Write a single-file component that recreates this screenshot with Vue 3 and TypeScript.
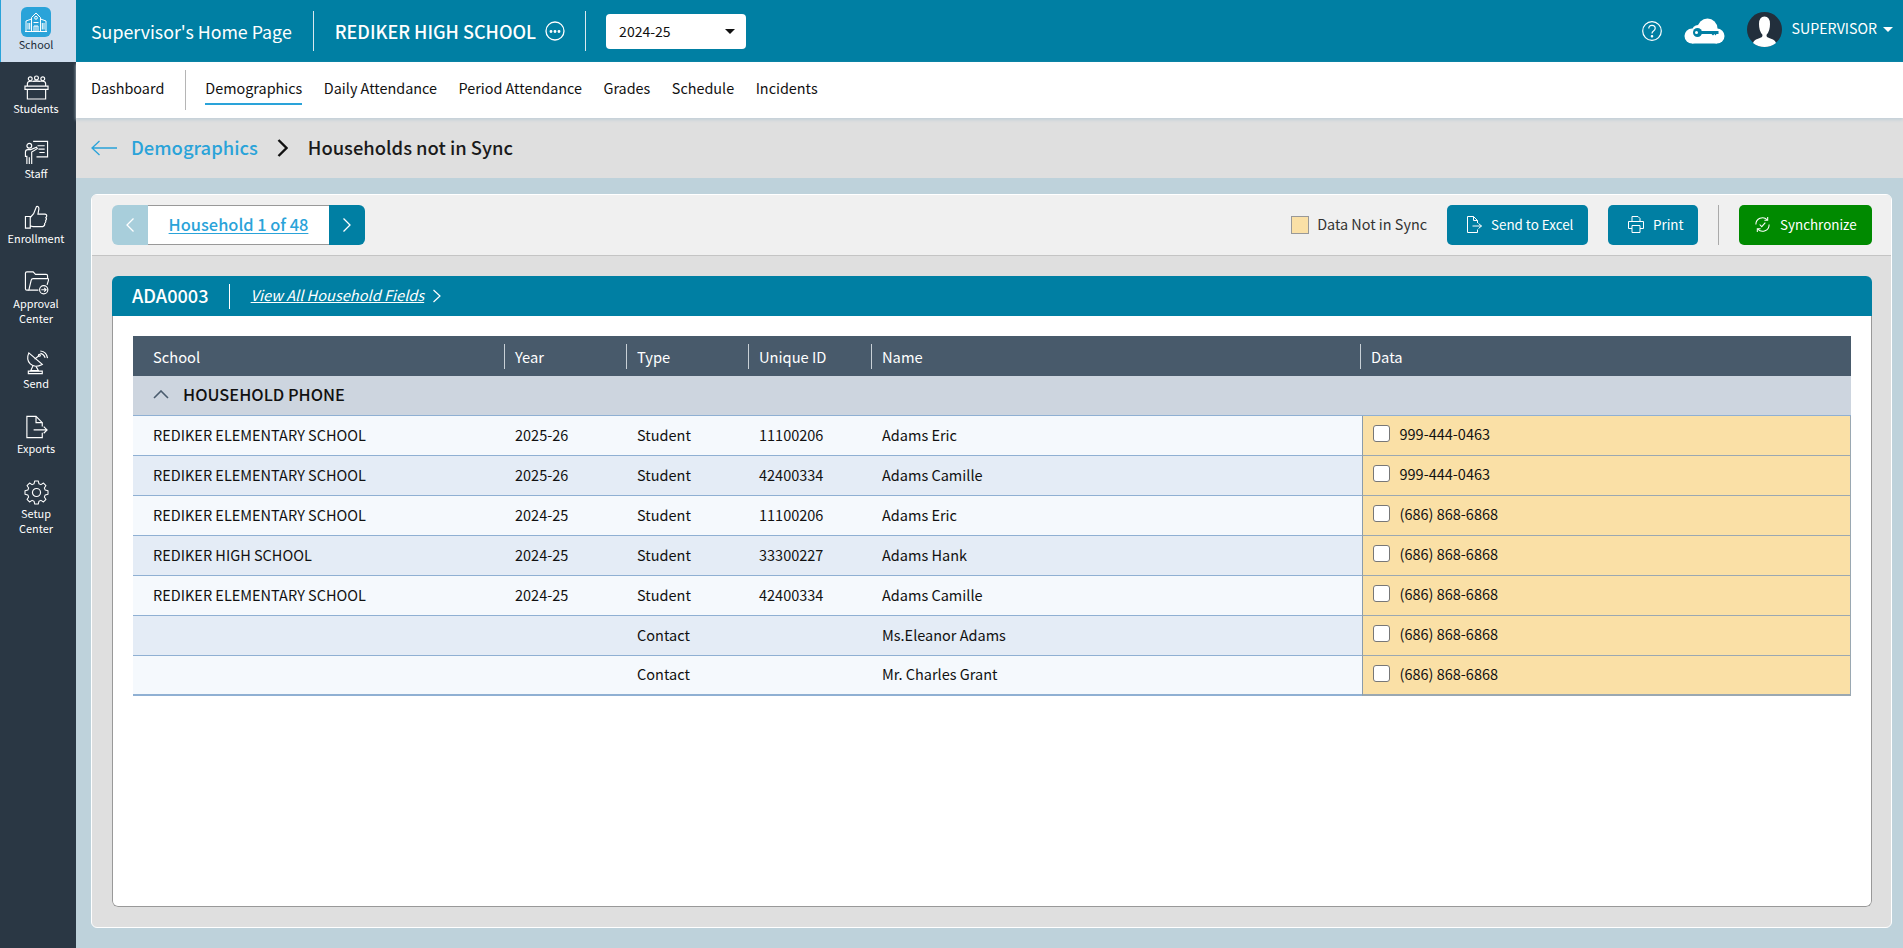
<script setup lang="ts">
interface NavItem {
  id: string
  label: string[]
}
interface Row {
  school: string
  year: string
  type: string
  uid: string
  name: string
  data: string
}

const sideItems: NavItem[] = [
  { id: 'students', label: ['Students'] },
  { id: 'staff', label: ['Staff'] },
  { id: 'enrollment', label: ['Enrollment'] },
  { id: 'approval', label: ['Approval', 'Center'] },
  { id: 'send', label: ['Send'] },
  { id: 'exports', label: ['Exports'] },
  { id: 'setup', label: ['Setup', 'Center'] },
]

const tabs: string[] = ['Daily Attendance', 'Period Attendance', 'Grades', 'Schedule', 'Incidents']
const columns: string[] = ['School', 'Year', 'Type', 'Unique ID', 'Name', 'Data']

const rows: Row[] = [
  { school: 'REDIKER ELEMENTARY SCHOOL', year: '2025-26', type: 'Student', uid: '11100206', name: 'Adams Eric', data: '999-444-0463' },
  { school: 'REDIKER ELEMENTARY SCHOOL', year: '2025-26', type: 'Student', uid: '42400334', name: 'Adams Camille', data: '999-444-0463' },
  { school: 'REDIKER ELEMENTARY SCHOOL', year: '2024-25', type: 'Student', uid: '11100206', name: 'Adams Eric', data: '(686) 868-6868' },
  { school: 'REDIKER HIGH SCHOOL', year: '2024-25', type: 'Student', uid: '33300227', name: 'Adams Hank', data: '(686) 868-6868' },
  { school: 'REDIKER ELEMENTARY SCHOOL', year: '2024-25', type: 'Student', uid: '42400334', name: 'Adams Camille', data: '(686) 868-6868' },
  { school: '', year: '', type: 'Contact', uid: '', name: 'Ms.Eleanor Adams', data: '(686) 868-6868' },
  { school: '', year: '', type: 'Contact', uid: '', name: 'Mr. Charles Grant', data: '(686) 868-6868' },
]
</script>

<template>
  <div class="app">
    <aside class="side">
      <div class="side-school">
        <span class="tile">
          <svg width="24" height="20" viewBox="0 0 24 20" fill="none" stroke="#fff" stroke-width="1">
            <path d="M1 19.500h22M2 19.500V9L7.500 7M22 19.500V9l-5.500-2" />
            <path d="M7.500 19.500V5.500L12 1l4.500 4.500v14" />
            <circle cx="12" cy="5.800" r="1.400" />
            <path d="M10 19.500v-5.500h4v5.500M12 14v5.500M9.500 10.500h5" />
            <path d="M4 11v6.500M5.700 11v6.500M18.300 11v6.500M20 11v6.500" />
          </svg>
        </span>
        <span class="side-school-label">School</span>
      </div>
      <nav class="side-list">
        <a v-for="item in sideItems" :key="item.id" class="side-item">
          <svg class="side-icon" viewBox="0 0 26 26" fill="none" stroke="#fff" stroke-width="1.200">
            <template v-if="item.id === 'students'">
              <circle cx="6.500" cy="4" r="2" />
              <circle cx="13" cy="3" r="2" />
              <circle cx="19.500" cy="4" r="2" />
              <path d="M3.500 11.500V9q0-2.500 3-2.500h13q3 0 3 2.500v2.500" />
              <path d="M9.500 6.800q3.500-1.600 7 0" />
              <path d="M1 11.500h24V15H1z" />
              <path d="M3.500 15v10h19V15" />
            </template>
            <template v-else-if="item.id === 'staff'">
              <path d="M9.500 1.500h15v16H13" />
              <path d="M14 6h7.500M15 9.500h6.500M16 13h5.500" />
              <circle cx="5.500" cy="6" r="2.500" />
              <path d="M3 25v-8H1.500v-4.500Q1.500 10 4 10h3l6-2.500 .8 1.500L8 12.500V25M5.500 18v7" />
            </template>
            <template v-else-if="item.id === 'enrollment'">
              <path d="M1.500 12h5v12h-5zM6.500 13l3.500-4 3-7.500q2.500-.5 2.500 2.500L14.500 9.500h7.500q2 .5 1.500 2.500l-.8 1q1.500 1.500-.2 3.200 .8 2-1 3 .5 2.500-2 3.300H9.500q-2 0-3-1" />
            </template>
            <template v-else-if="item.id === 'approval'">
              <path d="M5 21H3q-1.500 0-1.500-1.500V3.500Q1.500 2 3 2h6.500L12 4.500h11q1.500 0 1.500 1.500v3" />
              <path d="M15 21H5l2.500-10.500q.3-1.500 2-1.500H24.500q1.500 0 1 1.500l-1.500 5" />
              <circle cx="20.500" cy="20.500" r="4.300" />
              <path d="M18 20.500h5M21 18.500l2 2-2 2" />
            </template>
            <template v-else-if="item.id === 'send'">
              <path d="M5 3q-3 7 1.500 11.500T19 15z" />
              <path d="M11 9.500l4.500-3.500" />
              <circle cx="16" cy="5.500" r="1" />
              <path d="M17 1q6.500.5 7.500 7.500M17 3.500q3.500.5 5 4.500" />
              <path d="M9.500 16l-2.500 5.500h8L12.500 17" />
              <path d="M4.500 22h14.500v2.500H4.500z" />
            </template>
            <template v-else-if="item.id === 'exports'">
              <path d="M19 12V8l-6.500-6.500H3v22h16v-5" />
              <path d="M12.500 1.500V8H19" />
              <path d="M10 15.500h14M20.500 12l3.500 3.500-3.500 3.500" />
            </template>
            <template v-else>
              <circle cx="13" cy="13" r="4.200" />
              <path d="M11 1.500h4l.8 3.300 2.200.9 2.900-1.800 2.800 2.800-1.800 2.900.9 2.200 3.200.8v4l-3.200.8-.9 2.200 1.800 2.900-2.800 2.800-2.900-1.800-2.200.9-.8 3.300h-4l-.8-3.300-2.200-.9-2.900 1.800-2.800-2.800 1.800-2.900-.9-2.200-3.200-.8v-4l3.200-.8.9-2.200-1.800-2.900 2.800-2.800 2.900 1.800 2.200-.9z" transform="translate(13 13) scale(.92) translate(-13 -14.600)" stroke-linejoin="round" />
            </template>
          </svg>
          <span class="side-label">
            <span v-for="line in item.label" :key="line" class="side-line">{{ line }}</span>
          </span>
        </a>
      </nav>
    </aside>

    <div class="main">
      <header class="top">
        <span class="top-title">Supervisor's Home Page</span>
        <span class="top-div"></span>
        <span class="top-school">REDIKER HIGH SCHOOL</span>
        <svg class="more" width="20" height="20" viewBox="0 0 20 20" fill="none" stroke="#fff" stroke-width="1.300">
          <circle cx="10" cy="10" r="9" />
          <circle cx="6" cy="10.500" r=".8" fill="#fff" />
          <circle cx="10" cy="10.500" r=".8" fill="#fff" />
          <circle cx="14" cy="10.500" r=".8" fill="#fff" />
        </svg>
        <span class="top-div second"></span>
        <div class="year">
          <span>2024-25</span>
          <span class="caret dark"></span>
        </div>
        <div class="top-right">
          <svg class="help" width="20" height="20" viewBox="0 0 20 20" fill="none" stroke="#fff" stroke-width="1.200">
            <circle cx="10" cy="10" r="9.300" />
            <path d="M6.800 7.500Q6.800 4.300 10 4.300t3.200 2.900q0 1.700-1.700 2.700-1.500.9-1.500 2.600" />
            <circle cx="10" cy="15.200" r=".7" fill="#fff" />
          </svg>
          <svg class="cloud" width="41" height="26" viewBox="0 0 41 26">
            <g fill="#fff">
              <circle cx="8" cy="18" r="7.500" />
              <circle cx="14" cy="13" r="6" />
              <circle cx="23.500" cy="10.500" r="10" />
              <circle cx="33" cy="18" r="7.500" />
              <rect x="8" y="14" width="25" height="11.500" />
            </g>
            <circle cx="13.500" cy="14.500" r="4.500" fill="#007fa3" />
            <circle cx="12.500" cy="14.500" r="1.500" fill="#fff" />
            <path d="M17 13h17.500v3h-2l-1 1.500-1-1.500-1.500 1.500-1.500-1.500H17z" fill="#007fa3" />
          </svg>
          <span class="avatar">
            <svg width="35" height="35" viewBox="0 0 35 35">
              <circle cx="17.500" cy="17.500" r="17.500" fill="#222f3c" />
              <path d="M6 31q.5-2.500 3-3.500 3.500-1.500 6-2.500 .8-1.200.3-2.500Q12 19 12 12q0-7.500 5.500-7.500T23 12q0 7-3.300 10.500-.5 1.300.3 2.500 2.500 1 6 2.500 2.500 1 3 3.500-5 4-11.500 4T6 31z" fill="#fff" />
            </svg>
          </span>
          <span class="user">SUPERVISOR</span>
          <span class="caret"></span>
        </div>
      </header>

      <div class="tabs">
        <a class="tab">Dashboard</a>
        <span class="tab-div"></span>
        <a class="tab active">Demographics</a>
        <a v-for="t in tabs" :key="t" class="tab">{{ t }}</a>
      </div>

      <div class="crumb">
        <svg class="crumb-back" width="26" height="16" viewBox="0 0 26 16" fill="none" stroke="#2aa3d9" stroke-width="1.300">
          <path d="M1 8h25M8.500 1 1 8l7.500 7" />
        </svg>
        <a class="crumb-link">Demographics</a>
        <svg class="crumb-sep" width="11" height="18" viewBox="0 0 11 18" fill="none" stroke="#111" stroke-width="2.400">
          <path d="M1.500 1 9.500 9l-8 8" />
        </svg>
        <span class="crumb-page">Households not in Sync</span>
      </div>

      <div class="content">
        <section class="panel">
          <div class="toolbar">
            <div class="pager">
              <button class="pg prev" type="button">
                <svg width="10" height="16" viewBox="0 0 10 16" fill="none" stroke="#fff" stroke-width="1.300"><path d="M8.500 1.500 2 8l6.500 6.500" /></svg>
              </button>
              <a class="pg-label">Household 1 of 48</a>
              <button class="pg next" type="button">
                <svg width="10" height="16" viewBox="0 0 10 16" fill="none" stroke="#fff" stroke-width="1.300"><path d="M1.500 1.500 8 8l-6.500 6.500" /></svg>
              </button>
            </div>
            <div class="tools">
              <span class="swatch"></span>
              <span class="legend">Data Not in Sync</span>
              <button class="btn excel" type="button">
                <svg width="15" height="17" viewBox="0 0 15 17" fill="none" stroke="#fff" stroke-width="1">
                  <path d="M10.500 7V4.500L6.500.5H.5v16h10v-3" />
                  <path d="M6.500.5v4h4" />
                  <path d="M5.500 10h9M11.500 7.500l3 2.500-3 2.500" />
                </svg>
                Send to Excel
              </button>
              <button class="btn print" type="button">
                <svg width="16" height="17" viewBox="0 0 16 17" fill="none" stroke="#fff" stroke-width="1">
                  <path d="M4 5.500V.5h6L12 2.500v3" />
                  <path d="M4 12.500H.5v-7h15v7H12" />
                  <path d="M4 9.500h8v7H4z" />
                </svg>
                Print
              </button>
              <span class="tool-div"></span>
              <button class="btn sync" type="button">
                <svg width="17" height="17" viewBox="0 0 18 18" fill="none" stroke="#fff" stroke-width="1.100">
                  <path d="M2 9a7 7 0 0 1 12-5M16 9a7 7 0 0 1-12 5" />
                  <path d="M14.500 1v3.500H11M3.500 17v-3.500H7" />
                  <path d="M6 9l2.200 2.300L12 7" />
                </svg>
                Synchronize
              </button>
            </div>
          </div>

          <div class="panel-body">
            <div class="card">
              <div class="card-head">
                <span class="card-id">ADA0003</span>
                <span class="card-div"></span>
                <a class="card-link">View All Household Fields</a>
                <svg width="10" height="14" viewBox="0 0 10 14" fill="none" stroke="#fff" stroke-width="1.200"><path d="M1.500 1 8 7l-6.500 6" /></svg>
              </div>
              <div class="card-body">
                <table class="grid">
                  <colgroup>
                    <col class="c1" />
                    <col class="c2" />
                    <col class="c3" />
                    <col class="c4" />
                    <col class="c5" />
                    <col />
                  </colgroup>
                  <thead>
                    <tr>
                      <th v-for="c in columns" :key="c"><span class="th-in">{{ c }}</span></th>
                    </tr>
                  </thead>
                  <tbody>
                    <tr class="group">
                      <td colspan="6">
                        <div class="group-in">
                          <svg width="16" height="9" viewBox="0 0 16 9" fill="none" stroke="#4a5c6e" stroke-width="1.600"><path d="M1 8l7-7 7 7" /></svg>
                          HOUSEHOLD PHONE
                        </div>
                      </td>
                    </tr>
                    <tr v-for="(r, i) in rows" :key="i" class="row" :class="{ alt: i % 2 === 1, last: i === rows.length - 1 }">
                      <td class="first">{{ r.school }}</td>
                      <td>{{ r.year }}</td>
                      <td>{{ r.type }}</td>
                      <td>{{ r.uid }}</td>
                      <td>{{ r.name }}</td>
                      <td class="data">
                        <div class="data-in">
                          <span class="check"></span>
                          {{ r.data }}
                        </div>
                      </td>
                    </tr>
                  </tbody>
                </table>
              </div>
            </div>
          </div>
        </section>
      </div>
    </div>
  </div>
</template>

<style scoped>
.app {
  display: flex;
  height: 948px;
  overflow: hidden;
  font-family: "Noto Sans CJK SC", "Noto Sans", sans-serif;
  font-size: 14.4px;
  color: #111;
}
.side {
  width: 76px;
  flex: none;
  background: #2a3744;
}
.side-school {
  height: 62px;
  background: #cfdeee;
  border-left: 1px solid #2aa3d9;
  display: flex;
  flex-direction: column;
  align-items: center;
  padding: 7px 5px 0 0;
  box-sizing: border-box;
}
.tile {
  width: 30px;
  height: 30px;
  border-radius: 6px;
  background: #2aa3d9;
  display: flex;
  align-items: center;
  justify-content: center;
}
.side-school-label {
  font-size: 10.800px;
  line-height: 15px;
  color: #1a2a38;
}
.side-list {
  display: flex;
  flex-direction: column;
  gap: 24px;
  padding: 13px 4px 0 0;
}
.side-item {
  display: flex;
  flex-direction: column;
  align-items: center;
  color: #fff;
}
.side-icon {
  width: 25px;
  height: 25px;
}
.side-label {
  display: flex;
  flex-direction: column;
  align-items: center;
  margin-top: 1px;
  font-size: 10.900px;
  line-height: 15px;
}
.main {
  flex: 1;
  min-width: 0;
  display: flex;
  flex-direction: column;
  background: #bed2db;
}
.top {
  height: 62px;
  flex: none;
  background: #007fa3;
  color: #fff;
  display: flex;
  align-items: center;
  padding-left: 15px;
}
.top-title {
  font-size: 17.800px;
  padding-bottom: 1px;
}
.top-div {
  width: 1px;
  height: 40px;
  background: #d9e8ee;
  margin: 0 21px 0 21px;
}
.top-div.second {
  margin-left: 20px;
  margin-right: 20px;
}
.top-school {
  font-size: 18px;
  font-weight: 500;
  padding-bottom: 1px;
}
.more {
  margin-left: 9px;
}
.year {
  width: 140px;
  height: 35px;
  box-sizing: border-box;
  border-radius: 4px;
  background: #fff;
  color: #111;
  display: flex;
  align-items: center;
  justify-content: space-between;
  padding: 0 11px 0 13px;
  font-size: 14px;
}
.caret {
  width: 0;
  height: 0;
  border-left: 5px solid transparent;
  border-right: 5px solid transparent;
  border-top: 5px solid #fff;
}
.caret.dark {
  border-top-color: #111;
}
.top-right {
  margin-left: auto;
  display: flex;
  align-items: center;
  padding-right: 10px;
}
.cloud {
  margin-left: 22px;
  margin-bottom: 1px;
}
.avatar {
  margin-left: 22px;
  display: flex;
  margin-bottom: 3px;
}
.user {
  margin-left: 10px;
  margin-right: 6px;
  font-size: 14.200px;
  padding-bottom: 6px;
}
.top-right .caret {
  margin-bottom: 4px;
}
.tabs {
  height: 56px;
  flex: none;
  box-sizing: border-box;
  background: #fff;
  display: flex;
  align-items: center;
  gap: 21.500px;
  padding-left: 15px;
  box-shadow: 0 2px 3px #c3d0d8;
  position: relative;
}
.tab {
  height: 30px;
  line-height: 26px;
  font-size: 14.400px;
  color: #111;
  box-sizing: border-box;
}
.tab.active {
  border-bottom: 2px solid #2aa3d9;
}
.tab-div {
  width: 1px;
  height: 40px;
  background: #b5b5b5;
  margin: 0 -2px 0 -1px;
}
.crumb {
  height: 60px;
  flex: none;
  background: #dfdfdf;
  display: flex;
  align-items: center;
  padding-left: 15px;
}
.crumb-link {
  margin-left: 14px;
  font-size: 18.400px;
  font-weight: 500;
  color: #2aa3d9;
  padding-bottom: 2px;
}
.crumb-sep {
  margin-left: 19px;
}
.crumb-page {
  margin-left: 20px;
  font-size: 18.400px;
  font-weight: 500;
  color: #1a1a1a;
  padding-bottom: 2px;
}
.content {
  flex: 1;
  min-height: 0;
  display: flex;
  padding: 16px 11px 20px 15px;
}
.panel {
  flex: 1;
  min-width: 0;
  display: flex;
  flex-direction: column;
  border: 1px solid #fff;
  border-radius: 6px;
  background: #dfdfdf;
  overflow: hidden;
}
.toolbar {
  height: 61px;
  flex: none;
  box-sizing: border-box;
  background: #f0f0f0;
  border-bottom: 1px solid #c4c4c4;
  display: flex;
  align-items: center;
  justify-content: space-between;
  padding: 0 19px 0 20px;
}
.pager {
  display: flex;
  height: 40px;
}
.pg {
  width: 36px;
  border: 0;
  padding: 0;
  display: flex;
  align-items: center;
  justify-content: center;
}
.prev {
  background: #a8cedb;
  border-radius: 6px 0 0 6px;
}
.next {
  background: #007fa3;
  border-radius: 0 6px 6px 0;
}
.pg-label {
  width: 181px;
  box-sizing: border-box;
  background: #fff;
  border-top: 1px solid #999;
  border-bottom: 1px solid #999;
  text-align: center;
  line-height: 37px;
  font-size: 16.400px;
  font-weight: 500;
  color: #2aa3d9;
  text-decoration: underline;
  text-underline-offset: 2px;
}
.tools {
  display: flex;
  align-items: center;
}
.swatch {
  width: 18px;
  height: 18px;
  box-sizing: border-box;
  background: #fae0a6;
  border: 1px solid #999;
}
.legend {
  margin-left: 8px;
  margin-right: 20px;
  font-size: 14.400px;
  color: #333;
  padding-bottom: 3px;
}
.btn {
  height: 40px;
  border: 0;
  border-radius: 5px;
  color: #fff;
  font-family: inherit;
  font-size: 13.400px;
  font-weight: 400;
  display: flex;
  align-items: center;
  justify-content: flex-start;
  gap: 9px;
  padding: 0 0 2px 20px;
}
.excel {
  width: 141px;
  background: #007fa3;
}
.print {
  width: 90px;
  margin-left: 20px;
  background: #007fa3;
}
.tool-div {
  width: 1px;
  height: 40px;
  background: #aaa;
  margin: 0 20px;
}
.sync {
  width: 133px;
  padding-left: 15px;
  background: #008a00;
}
.panel-body {
  flex: 1;
  min-height: 0;
  display: flex;
  padding: 20px 19px 20px 20px;
}
.card {
  flex: 1;
  min-width: 0;
  display: flex;
  flex-direction: column;
  border-radius: 6px;
  overflow: hidden;
}
.card-head {
  height: 40px;
  flex: none;
  background: #007fa3;
  color: #fff;
  display: flex;
  align-items: center;
  padding-left: 20px;
}
.card-id {
  font-size: 18.200px;
  font-weight: 500;
  padding-bottom: 2px;
}
.card-div {
  width: 1px;
  height: 25px;
  background: #fff;
  margin: 0 21px 0 20px;
}
.card-link {
  font-size: 14.600px;
  font-style: italic;
  text-decoration: underline;
  margin-right: 8px;
  padding-bottom: 3px;
}
.card-body {
  flex: 1;
  min-height: 0;
  background: #fff;
  border: 1px solid #999;
  border-top: 0;
  border-radius: 0 0 6px 6px;
  padding: 20px;
}
.grid {
  width: 100%;
  table-layout: fixed;
  border-collapse: separate;
  border-spacing: 0;
}
.c1 {
  width: 371px;
}
.c2,
.c3 {
  width: 122px;
}
.c4 {
  width: 123px;
}
.c5 {
  width: 491px;
}
th {
  height: 40px;
  padding: 0;
  background: #485a6b;
  color: #fff;
  font-size: 14.700px;
  font-weight: 400;
  text-align: left;
}
.th-in {
  display: flex;
  align-items: center;
  height: 25px;
  padding-left: 10px;
  border-left: 1px solid #c8d0d6;
}
th:first-child .th-in {
  border-left: 0;
  padding-left: 20px;
}
th:last-child .th-in {
  margin-left: -2px;
  padding-left: 10px;
}
.group td {
  height: 40px;
  box-sizing: border-box;
  padding: 0;
  background: #cdd5df;
  border-bottom: 1px solid #8fb0d3;
}
.group-in {
  display: flex;
  align-items: center;
  gap: 14px;
  padding: 0 0 3px 20px;
  font-size: 16.400px;
  font-weight: 500;
  color: #111;
}
.row td {
  height: 40px;
  box-sizing: border-box;
  padding: 0 0 3px 11px;
  background: #f5f9fd;
  border-bottom: 1px solid #8fb0d3;
  font-size: 14.500px;
  color: #111;
}
.row.alt td {
  background: #e4ecf6;
}
.row td.first {
  padding-left: 20px;
}
.row.last td {
  border-bottom-width: 2px;
}
.row td.data {
  background: #fae0a6;
  padding: 0 0 0 10px;
  border-left: 1px solid #8a9cab;
  border-right: 1px solid #9aa8b2;
  border-bottom-color: #9aa8b2;
}
.data-in {
  display: flex;
  align-items: center;
  gap: 9.500px;
  position: relative;
  top: -2px;
}
.check {
  width: 17px;
  height: 17px;
  box-sizing: border-box;
  background: #fff;
  border: 1px solid #777;
  border-radius: 3px;
}
</style>

<style>
html,
body {
  margin: 0;
  padding: 0;
}
</style>
